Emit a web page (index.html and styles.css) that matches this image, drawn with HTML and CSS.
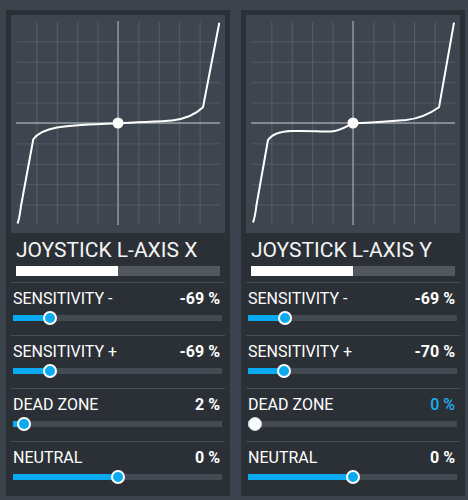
FILE: index.html
```html
<!DOCTYPE html>
<html lang="en">
  <head>
    <meta charset="UTF-8" />
    <meta name="viewport" content="width=device-width, initial-scale=1.0" />
    <title>Joystick Curves</title>
    <link rel="stylesheet" href="styles.css">
  </head>
  <body>
    <div class="container">
      <!-- Left axis -->
      <div class="panel">
        <div class="graph">
          <svg width="214" height="218" viewBox="0 0 214 218">
            <defs>
              <pattern id="gridX" width="20.4" height="20.4" patternUnits="userSpaceOnUse">
                <path d="M0 0 V20.4 M0 0 H20.4" stroke="#666c74" stroke-width="1.2" fill="none" />
              </pattern>
            </defs>
            <g transform="translate(5,6)">
              <rect x="1" y="1" width="202.8" height="202.8" fill="url(#gridX)" />
              <line class="axis-line" x1="102" y1="0" x2="102" y2="204" />
              <line class="axis-line" x1="0" y1="102" x2="204" y2="102" />
              <path class="curve" d="M1.5 202.5 C3 199 4 193 5 185 L17.3 118.3 C21 113 30 108.5 41 106.5 C55 104 75 103.5 102 102.3 C125 101 145 100.5 156 99.5 C170 98 180 93 187 86.3 L203.3 1.7" />
              <circle cx="102" cy="102" r="5.5" fill="#fff" />
            </g>
          </svg>
        </div>
        <div class="axis">
          <h2>JOYSTICK L-AXIS X</h2>
          <div class="progress"><div class="progress-fill" style="width: 50%"></div></div>
        </div>
        <div class="setting">
          <div class="setting-head"><span>SENSITIVITY -</span><span class="value">-69 %</span></div>
          <div class="slider" style="--pos: 0.155">
            <div class="track"><div class="track-fill"></div></div>
            <div class="thumb"></div>
          </div>
        </div>
        <div class="setting">
          <div class="setting-head"><span>SENSITIVITY +</span><span class="value">-69 %</span></div>
          <div class="slider" style="--pos: 0.155">
            <div class="track"><div class="track-fill"></div></div>
            <div class="thumb"></div>
          </div>
        </div>
        <div class="setting">
          <div class="setting-head"><span>DEAD ZONE</span><span class="value">2 %</span></div>
          <div class="slider" style="--pos: 0.02">
            <div class="track"><div class="track-fill"></div></div>
            <div class="thumb"></div>
          </div>
        </div>
        <div class="setting">
          <div class="setting-head"><span>NEUTRAL</span><span class="value">0 %</span></div>
          <div class="slider" style="--pos: 0.5">
            <div class="track"><div class="track-fill"></div></div>
            <div class="thumb"></div>
          </div>
        </div>
      </div>

      <!-- Right axis -->
      <div class="panel">
        <div class="graph">
          <svg width="214" height="218" viewBox="0 0 214 218">
            <defs>
              <pattern id="gridY" width="20.4" height="20.4" patternUnits="userSpaceOnUse">
                <path d="M0 0 V20.4 M0 0 H20.4" stroke="#666c74" stroke-width="1.2" fill="none" />
              </pattern>
            </defs>
            <g transform="translate(5,6)">
              <rect x="1" y="1" width="202.8" height="202.8" fill="url(#gridY)" />
              <line class="axis-line" x1="102" y1="0" x2="102" y2="204" />
              <line class="axis-line" x1="0" y1="102" x2="204" y2="102" />
              <path class="curve" d="M2 201.5 C3.5 198 4.5 192 5.5 184 L17 119 C21 113 30 110.5 40 110 C55 109.5 68 110.5 80 110.5 C90 110 96 105 102 102.3 C120 101.5 140 100 155 99 C170 97.5 180 92 188 86.3 L203 1.7" />
              <circle cx="102" cy="102" r="5.5" fill="#fff" />
            </g>
          </svg>
        </div>
        <div class="axis">
          <h2>JOYSTICK L-AXIS Y</h2>
          <div class="progress"><div class="progress-fill" style="width: 50%"></div></div>
        </div>
        <div class="setting">
          <div class="setting-head"><span>SENSITIVITY -</span><span class="value">-69 %</span></div>
          <div class="slider" style="--pos: 0.155">
            <div class="track"><div class="track-fill"></div></div>
            <div class="thumb"></div>
          </div>
        </div>
        <div class="setting">
          <div class="setting-head"><span>SENSITIVITY +</span><span class="value">-70 %</span></div>
          <div class="slider" style="--pos: 0.15">
            <div class="track"><div class="track-fill"></div></div>
            <div class="thumb"></div>
          </div>
        </div>
        <div class="setting">
          <div class="setting-head"><span>DEAD ZONE</span><span class="value value-zero">0 %</span></div>
          <div class="slider slider-off" style="--pos: 0">
            <div class="track"><div class="track-fill"></div></div>
            <div class="thumb"></div>
          </div>
        </div>
        <div class="setting">
          <div class="setting-head"><span>NEUTRAL</span><span class="value">0 %</span></div>
          <div class="slider" style="--pos: 0.5">
            <div class="track"><div class="track-fill"></div></div>
            <div class="thumb"></div>
          </div>
        </div>
      </div>
    </div>
  </body>
</html>
```

FILE: styles.css
```css
/* General styling */
body {
  font-family: Roboto, "Noto Sans", sans-serif;
  background-color: #3c434c;
  color: #fff;
  margin: 0;
  padding: 10px 0 0 6px;
}

.container {
  display: flex;
  gap: 11px;
}

.panel {
  width: 224px;
  box-sizing: border-box;
  background-color: #2b3037;
  padding: 5px 5px 2px;
}

/* Curve graph */
.graph {
  height: 218px;
  background-color: #3e454f;
}

.graph svg {
  display: block;
}

.axis-line {
  stroke: #9a9fa6;
  stroke-width: 1.3;
}

.curve {
  fill: none;
  stroke: #fff;
  stroke-width: 2;
  stroke-linejoin: round;
}

/* Axis title + live input bar */
.axis {
  padding: 5px 5px 6px;
}

h2 {
  margin: 0;
  font-size: 21px;
  font-weight: 400;
  line-height: 24px;
  color: #f4f4f4;
}

.progress {
  margin-top: 4px;
  height: 10px;
  background-color: #53585e;
}

.progress-fill {
  height: 100%;
  background-color: #fff;
}

/* Setting rows */
.setting {
  border-top: 1px solid #464c54;
  padding: 6px 3px 10px 2px;
}

.setting-head {
  display: flex;
  justify-content: space-between;
  font-size: 16px;
  line-height: 20px;
}

.value {
  font-weight: 700;
  margin-right: 2px;
}

.value-zero {
  color: #1aaff0;
  font-weight: 500;
}

.slider {
  position: relative;
  height: 14px;
  margin-top: 2px;
  display: flex;
  align-items: center;
}

.track {
  flex: 1;
  height: 6px;
  background-color: #444a52;
}

.track-fill {
  height: 100%;
  width: calc(7px + var(--pos) * (100% - 14px));
  background-color: #0aaaf0;
}

.thumb {
  position: absolute;
  top: 0;
  left: calc(var(--pos) * (100% - 14px));
  width: 14px;
  height: 14px;
  box-sizing: border-box;
  border: 2px solid #fff;
  border-radius: 50%;
  background-color: #0aaaf0;
}

.slider-off .thumb {
  background-color: #fff;
  border: 1px solid #c9d3da;
}
```
